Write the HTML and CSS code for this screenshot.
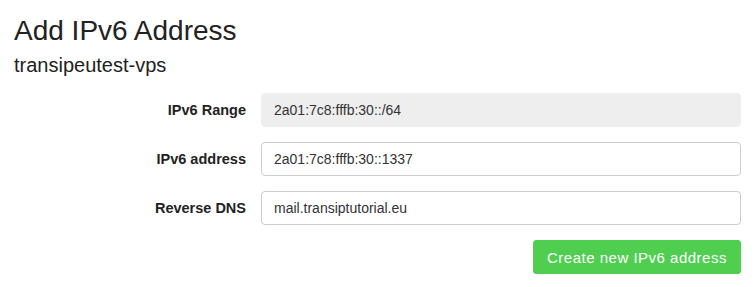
FILE: index.html
```html
<!DOCTYPE html>
<html>
<head>
<meta charset="utf-8">
<link rel="stylesheet" href="styles.css">
</head>
<body>
<div class="page">
  <h2 class="title">Add IPv6 Address</h2>
  <h4 class="subtitle">transipeutest-vps</h4>
  <form class="form">
    <label class="label">IPv6 Range</label>
    <div class="input input-disabled">2a01:7c8:fffb:30::/64</div>
    <label class="label">IPv6 address</label>
    <div class="input">2a01:7c8:fffb:30::1337</div>
    <label class="label">Reverse DNS</label>
    <div class="input">mail.transiptutorial.eu</div>
    <div class="actions">
      <button type="button" class="btn">Create new IPv6 address</button>
    </div>
  </form>
</div>
</body>
</html>
```

FILE: styles.css
```css
* { box-sizing: border-box; }
html, body { margin: 0; padding: 0; background: #fff; }
body {
  font-family: "Liberation Sans", Arial, sans-serif;
  font-size: 14px;
  color: #222;
}
.page {
  padding: 15px 14px 0 14px;
}
.title {
  margin: 0;
  font-size: 28px;
  font-weight: normal;
  line-height: 31px;
}
.subtitle {
  margin: 8px 0 0 0;
  font-size: 20px;
  font-weight: normal;
  line-height: 22px;
}
.form {
  margin-top: 17px;
  display: grid;
  grid-template-columns: 232px 1fr;
  column-gap: 15px;
  row-gap: 15px;
  align-items: center;
}
.label {
  text-align: right;
  font-weight: bold;
  font-size: 14.5px;
  color: #222;
}
.input {
  height: 34px;
  padding: 0 12px;
  display: flex;
  align-items: center;
  border: 1px solid #ccc;
  border-radius: 4px;
  color: #333;
  font-size: 14px;
  background: #fff;
}
.input-disabled {
  background: #eee;
  border-color: #eee;
}
.actions {
  grid-column: 2;
  display: flex;
  justify-content: flex-end;
}
.btn {
  height: 34px;
  width: 208px;
  padding: 0;
  border: 1px solid #4fce50;
  border-radius: 3px;
  background: #4fce50;
  color: #fff;
  font-family: "Liberation Sans", Arial, sans-serif;
  font-size: 15px;
  letter-spacing: 0.5px;
}
```
